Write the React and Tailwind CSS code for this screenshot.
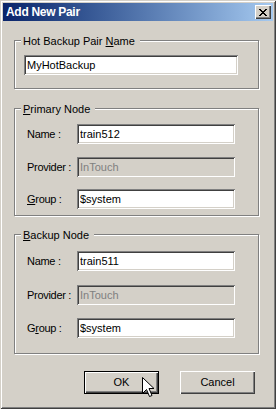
import React from "react";

const FONT = "font-['Liberation_Sans',Arial,sans-serif]";
const SUNKEN =
  "shadow-[inset_1px_1px_0_#808080,inset_-1px_-1px_0_#ffffff,inset_2px_2px_0_#404040,inset_-2px_-2px_0_#d4d0c8]";
const RAISED =
  "shadow-[inset_1px_1px_0_#ffffff,inset_-1px_-1px_0_#404040,inset_-2px_-2px_0_#808080]";

function CloseX() {
  const rows = [
    "XX....XX",
    ".XX..XX.",
    "..XXXX..",
    "...XX...",
    "..XXXX..",
    ".XX..XX.",
    "XX....XX",
  ];
  const rects = [];
  rows.forEach((r, y) =>
    r.split("").forEach((c, x) => {
      if (c === "X") rects.push(<rect key={`${x}-${y}`} x={x} y={y} width="1" height="1" />);
    })
  );
  return (
    <svg width="8" height="7" viewBox="0 0 8 7" shapeRendering="crispEdges" fill="#000">
      {rects}
    </svg>
  );
}

function Field({ value, disabled, className = "" }) {
  return (
    <input
      readOnly
      value={value}
      className={`${FONT} ${SUNKEN} h-[20px] px-[3px] text-[11px] outline-none ${
        disabled ? "bg-[#d4d0c8] text-[#808080]" : "bg-white text-black"
      } ${className}`}
    />
  );
}

function Row({ label, value, disabled, className = "" }) {
  return (
    <div className={`flex items-center pl-[12px] ${className}`}>
      <span className="w-[50px] whitespace-nowrap tracking-[-0.3px]">{label}</span>
      <Field value={value} disabled={disabled} className="w-[158px]" />
    </div>
  );
}

function Group({ label, className = "", children }) {
  return (
    <div
      className={`flex flex-col w-[245px] border border-[#808080] shadow-[1px_1px_0_#ffffff,inset_1px_1px_0_#ffffff] ${className}`}
    >
      <span className="block w-fit -mt-[6px] ml-[6px] pl-[2px] pr-[5px] bg-[#d4d0c8] leading-[13px] whitespace-nowrap">
        {label}
      </span>
      {children}
    </div>
  );
}

export default function App() {
  return (
    <div
      className={`relative w-[276px] h-[409px] bg-[#d4d0c8] p-[3px] ${FONT} text-[11px] leading-[13px] text-black shadow-[inset_1px_1px_0_#d4d0c8,inset_-1px_-1px_0_#404040,inset_2px_2px_0_#ffffff,inset_-2px_-2px_0_#808080]`}
    >
      {/* Title bar */}
      <div className="flex h-[18px] items-center justify-between bg-linear-to-r from-[#0a246a] to-[#a6caf0] pl-[3px] pr-[2px]">
        <span className="text-[12px] font-bold leading-[18px] tracking-[-0.3px] text-white">Add New Pair</span>
        <div className={`flex h-[14px] w-[16px] items-center justify-center bg-[#d4d0c8] ${RAISED}`}>
          <CloseX />
        </div>
      </div>

      <div className="flex flex-col pl-[11px]">
        <Group
          className="mt-[19px] pb-[13px]"
          label={
            <>
              Hot Backup Pair <u>N</u>ame
            </>
          }
        >
          <Field value="MyHotBackup" className="mt-[7px] ml-[9px] w-[214px]" />
        </Group>

        <Group
          className="mt-[19px] pb-[6px]"
          label={
            <>
              <u>P</u>rimary Node
            </>
          }
        >
          <Row className="mt-[8px]" label="Name :" value="train512" />
          <Row className="mt-[13px]" label="Provider :" value="InTouch" disabled />
          <Row
            className="mt-[12px]"
            label={
              <>
                <u>G</u>roup :
              </>
            }
            value="$system"
          />
        </Group>

        <Group
          className="mt-[18px] pb-[15px]"
          label={
            <>
              <u>B</u>ackup Node
            </>
          }
        >
          <Row className="mt-[9px]" label="Name :" value="train511" />
          <Row className="mt-[14px]" label="Provider :" value="InTouch" disabled />
          <Row
            className="mt-[13px]"
            label={
              <>
                G<u>r</u>oup :
              </>
            }
            value="$system"
          />
        </Group>

        <div className="mt-[17px] ml-[70px] flex gap-[21px]">
          <div className="h-[23px] w-[75px] border border-black">
            <div className="flex h-full w-full items-center justify-center shadow-[inset_1px_1px_0_#ffffff,inset_-1px_-1px_0_#404040,inset_-2px_-2px_0_#808080]">
              OK
            </div>
          </div>
          <div className={`flex h-[23px] w-[75px] items-center justify-center ${RAISED}`}>Cancel</div>
        </div>
      </div>

      {/* Mouse cursor */}
      <svg
        className="absolute left-[142px] top-[377px]"
        width="13"
        height="21"
        viewBox="0 0 13 21"
      >
        <path
          d="M0.5 0.5 V16.5 L4.5 12.5 L7.5 19.5 L10 18.5 L7 11.5 H12 Z"
          fill="#ffffff"
          stroke="#000000"
          strokeWidth="1"
          strokeLinejoin="miter"
        />
      </svg>
    </div>
  );
}
